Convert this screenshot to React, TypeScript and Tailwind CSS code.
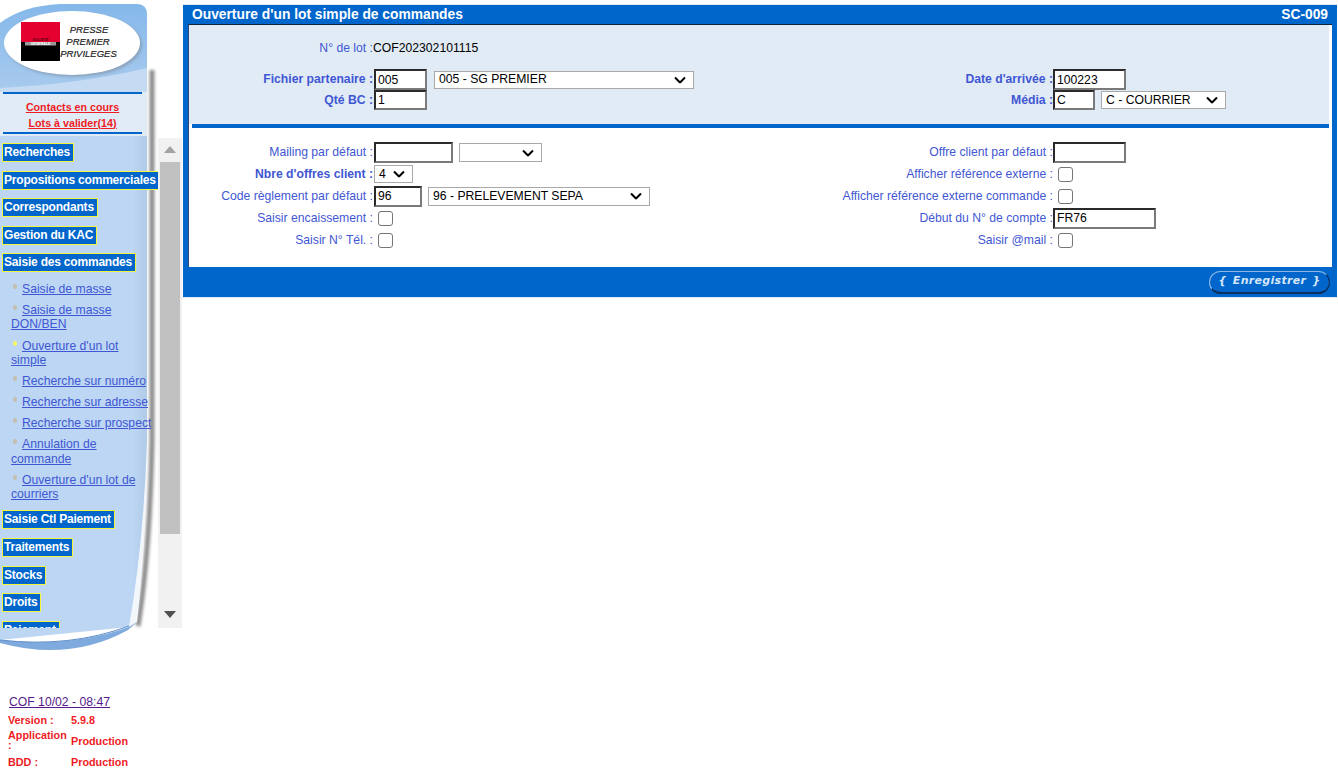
import React from 'react';

const MenuHead = ({ label }: { label: string }) => (
  <div className="mb-[8.6px] flex">
    <a className="h-[19px] border border-[#f5f53c] bg-[#0066cc] pr-[3px] pl-[1px] text-[12px] leading-[16px] font-bold tracking-[-0.2px] whitespace-nowrap text-white">
      {label}
    </a>
  </div>
);

const SubItem = ({ label, active }: { label: string; active?: boolean }) => (
  <div className="mb-[6.7px] pl-[11px] text-[12.2px] leading-[14.4px] text-[#3f57d3]">
    <span className={`mr-[5px] ml-[2px] inline-block h-[5px] w-[4px] rounded-full align-[4px] ${active ? 'bg-[#f5f56a]' : 'bg-[#c4bfae]'}`}></span>
    <a className="underline">{label}</a>
  </div>
);

const SidebarBackdrop = () => (
  <svg className="absolute top-0 left-0" width="183" height="660" viewBox="0 0 183 660">
    <defs>
      <linearGradient id="head" x1="0" y1="0" x2="0" y2="1">
        <stop offset="0" stopColor="#84b8ea" />
        <stop offset="1" stopColor="#a9cbee" />
      </linearGradient>
      <linearGradient id="menu" x1="0" y1="0" x2="1" y2="0">
        <stop offset="0" stopColor="#bcd6f3" />
        <stop offset="0.9" stopColor="#bcd6f3" />
        <stop offset="1" stopColor="#b0cbe8" />
      </linearGradient>
      <filter id="blur" x="-50%" y="-10%" width="200%" height="120%">
        <feGaussianBlur stdDeviation="1.4" />
      </filter>
    </defs>
    <path d="M152 70 L152 440 Q150 550 138 626" fill="none" stroke="#8d8d8d" strokeWidth="5" filter="url(#blur)" />
    <path d="M0 23 Q22 6 60 4 L138 4 Q147 5 147 14 L147 92 L0 92 Z" fill="url(#head)" />
    <path d="M0 88 Q80 84 147 68 L147 92 L0 92 Z" fill="#c4dbf3" />
    <ellipse cx="74" cy="45" rx="68" ry="32" fill="#8ba3bd" filter="url(#blur)" />
    <ellipse cx="72" cy="43" rx="68" ry="32" fill="#ffffff" />
    <rect x="21" y="22" width="39" height="20" fill="#e4002f" />
    <rect x="21" y="42" width="39" height="19" fill="#000000" />
    <rect x="25" y="42" width="31" height="3.5" fill="#9a9a9a" />
    <text x="40.5" y="40.5" fontFamily="Liberation Sans, sans-serif" fontSize="3.6" fontWeight="700" textAnchor="middle" fill="#5a0010">SOCIETE</text>
    <text x="40.5" y="45" fontFamily="Liberation Sans, sans-serif" fontSize="3.6" fontWeight="700" textAnchor="middle" fill="#ffffff">GENERALE</text>
    <g fontFamily="Liberation Sans, sans-serif" fontSize="9.5" fontStyle="italic" fill="#222222" stroke="#222222" strokeWidth="0.2" textAnchor="middle">
      <text x="89" y="33">PRESSE</text>
      <text x="88" y="45">PREMIER</text>
      <text x="88.5" y="57">PRIVILEGES</text>
    </g>
    <rect x="0" y="92" width="147" height="44" fill="#e1ebf6" />
    <path d="M147 440 Q146 545 137 622 L127 628 L130 560 Z" fill="#f3f7fb" />
    <path d="M0 136 L147 136 L147 440 Q144 540 129 627 L0 640 Z" fill="url(#menu)" />
    <path d="M0 640 Q70 648 129 627 L137 622 L128 630 Q70 662 0 643 Z" fill="#7eaadd" />
    <path d="M0 640 Q70 648 129 626" fill="none" stroke="#5f8fc8" strokeWidth="1" />
  </svg>
);

const Sidebar = () => (
  <aside className="relative h-[768px] w-[183px] shrink-0 overflow-hidden">
    <SidebarBackdrop />
    <div className="relative">
      <div className="h-[92px]"></div>
      <div className="ml-[3px] flex h-[42px] w-[139px] flex-col items-center justify-center border-y-2 border-[#0066cc] pt-[5px] text-[10.7px] leading-[15.5px] font-bold text-[#ee1c25] underline">
        <a>Contacts en cours</a>
        <a>Lots à valider(14)</a>
      </div>
      <div className="mt-[4px] flex h-[490px]">
        <div className="w-[158px] overflow-hidden pt-[5px] pl-[2px]">
          <MenuHead label="Recherches" />
          <MenuHead label="Propositions commerciales" />
          <MenuHead label="Correspondants" />
          <MenuHead label="Gestion du KAC" />
          <MenuHead label="Saisie des commandes" />
          <div className="-ml-[2px] w-[155px] pt-[1px] pb-[2px]">
            <SubItem label="Saisie de masse" />
            <SubItem label="Saisie de masse DON/BEN" />
            <SubItem label="Ouverture d'un lot simple" active />
            <SubItem label="Recherche sur numéro" />
            <SubItem label="Recherche sur adresse" />
            <SubItem label="Recherche sur prospect" />
            <SubItem label="Annulation de commande" />
            <SubItem label="Ouverture d'un lot de courriers" />
          </div>
          <MenuHead label="Saisie Ctl Paiement" />
          <MenuHead label="Traitements" />
          <MenuHead label="Stocks" />
          <MenuHead label="Droits" />
          <MenuHead label="Paiement" />
        </div>
        <div className="flex w-[24px] flex-col items-center bg-[#f1f1f1]">
          <svg className="mt-[8px]" width="12" height="7" viewBox="0 0 12 7"><path d="M6 0 L12 7 L0 7 Z" fill="#a3a3a3" /></svg>
          <div className="mt-[9px] h-[372px] w-[20px] bg-[#c1c1c1]"></div>
          <svg className="mt-[77px]" width="12" height="7" viewBox="0 0 12 7"><path d="M0 0 L12 0 L6 7 Z" fill="#505050" /></svg>
        </div>
      </div>
      <div className="mt-[67px] pl-[9px] text-[12.2px] leading-[15px] text-[#551a8b] underline">
        <a>COF 10/02 - 08:47</a>
      </div>
      <div className="mt-[2px] grid grid-cols-[63px_1fr] pl-[8px] text-[10.8px] leading-[10px] font-bold text-[#ee1c25]">
        <div className="flex h-[15px] items-center">Version :</div>
        <div className="flex h-[15px] items-center">5.9.8</div>
        <div className="h-[27px] pt-[3px]">Application :</div>
        <div className="flex h-[27px] items-center">Production</div>
        <div className="flex h-[15px] items-center">BDD :</div>
        <div className="flex h-[15px] items-center">Production</div>
      </div>
    </div>
  </aside>
);

const Label = ({ text, bold }: { text: string; bold?: boolean }) => (
  <div className={`flex items-center justify-end text-[12.2px] whitespace-nowrap text-[#3f57d3] ${bold ? 'font-bold' : ''}`}>{text}</div>
);

const inputClass =
  'box-border block border-2 border-t-[#2a2a2a] border-r-[#7a7a7a] border-b-[#7a7a7a] border-l-[#2a2a2a] bg-white px-[2px] text-[12.2px] text-black outline-none';

const TextField = ({ value, width, height = 'h-[21px]' }: { value: string; width: string; height?: string }) => (
  <input className={`${inputClass} ${width} ${height}`} defaultValue={value} />
);

const Select = ({ value, className }: { value: string; className: string }) => (
  <div className={`relative box-border flex items-center border border-[#a9a9a9] bg-white pl-[4px] text-[12.2px] whitespace-nowrap text-black ${className}`}>
    <span>{value}</span>
    <svg className="absolute top-1/2 right-[7px] -translate-y-1/2" width="12" height="7" viewBox="0 0 12 7">
      <path d="M1 1 L6 6 L11 1" fill="none" stroke="#000000" strokeWidth="2" />
    </svg>
  </div>
);

const Check = () => (
  <input type="checkbox" className="block h-[15px] w-[15px] appearance-none rounded-[3px] border border-[#767676] bg-white" />
);

const Panel = () => (
  <main className="mt-[4px] mr-[1px] h-[294px] w-[1154px] border-y border-[#dce8f5] bg-[#0066cc]">
    <div className="flex h-[19px] items-center justify-between pt-[1px] pr-[9px] pl-[9px] text-[13.8px] font-bold text-white">
      <span>Ouverture d'un lot simple de commandes</span>
      <span>SC-009</span>
    </div>
    <div className="mx-[5px] h-[243px] border-t border-l border-t-[#10243c] border-l-[#2d4a78] bg-white pr-[3px]">
      <section className="h-[99px] bg-[#e1ebf6] pt-[13px]">
        <div className="grid h-[20px] grid-cols-[184px_1fr]">
          <Label text="N° de lot :" />
          <div className="flex items-center text-[12.2px] text-black">COF202302101115</div>
        </div>
        <div className="mt-[11px] grid grid-cols-[184px_462px_218px_1fr] grid-rows-[21px_20px]">
          <Label text="Fichier partenaire :" bold />
          <div className="flex items-center">
            <TextField value="005" width="w-[53px] ml-px" />
            <Select value="005 - SG PREMIER" className="ml-[7px] h-[18px] w-[260px]" />
          </div>
          <Label text="Date d'arrivée :" bold />
          <div className="flex items-center">
            <TextField value="100223" width="w-[73px]" />
          </div>
          <Label text="Qté BC :" bold />
          <div className="flex items-center">
            <TextField value="1" width="w-[53px] ml-px" height="h-[20px]" />
          </div>
          <Label text="Média :" bold />
          <div className="flex items-center">
            <TextField value="C" width="w-[42px]" height="h-[20px]" />
            <Select value="C - COURRIER" className="ml-[6px] h-[18px] w-[125px]" />
          </div>
        </div>
      </section>
      <div className="ml-[3px] h-[4px] bg-[#0066cc]"></div>
      <section className="grid grid-cols-[184px_462px_218px_1fr] grid-rows-[21px_22px_22px_22px_22px] pt-[14px]">
        <Label text="Mailing par défaut :" />
        <div className="flex items-center">
          <TextField value="" width="w-[79px] ml-px" />
          <Select value="" className="ml-[6px] h-[19px] w-[83px]" />
        </div>
        <Label text="Offre client par défaut :" />
        <div className="flex items-center">
          <TextField value="" width="w-[73px]" />
        </div>

        <Label text="Nbre d'offres client :" bold />
        <div className="flex items-center">
          <Select value="4" className="ml-px h-[18px] w-[39px]" />
        </div>
        <Label text="Afficher référence externe :" />
        <div className="flex items-center pl-[5px]"><Check /></div>

        <Label text="Code règlement par défaut :" />
        <div className="flex items-center">
          <TextField value="96" width="w-[48px] ml-px" />
          <Select value="96 - PRELEVEMENT SEPA" className="ml-[6px] h-[19px] w-[222px]" />
        </div>
        <Label text="Afficher référence externe commande :" />
        <div className="flex items-center pl-[5px]"><Check /></div>

        <Label text="Saisir encaissement :" />
        <div className="flex items-center pl-[5px]"><Check /></div>
        <Label text="Début du N° de compte :" />
        <div className="flex items-center">
          <TextField value="FR76" width="w-[103px]" />
        </div>

        <Label text="Saisir N° Tél. :" />
        <div className="flex items-center pl-[5px]"><Check /></div>
        <Label text="Saisir @mail :" />
        <div className="flex items-center pl-[5px]"><Check /></div>
      </section>
    </div>
    <div className="flex h-[30px] items-center justify-end pr-[7px]">
      <button className="h-[23px] w-[121px] rounded-full border border-t-[#8fb8e4] border-r-[#0b2f5e] border-b-2 border-b-[#0b2f5e] border-l-[#8fb8e4] bg-[#0066cc] pb-[2px] text-[11px] leading-[16px] font-bold tracking-[0.3px] text-[#d5e6f8] italic [word-spacing:2px] [font-family:'DejaVu_Sans',sans-serif]">
        {'{ Enregistrer }'}
      </button>
    </div>
  </main>
);

export default function App() {
  return (
    <div className="flex h-[768px] w-[1338px] overflow-hidden bg-white [font-family:'Liberation_Sans',Arial,sans-serif]">
      <Sidebar />
      <Panel />
    </div>
  );
}
